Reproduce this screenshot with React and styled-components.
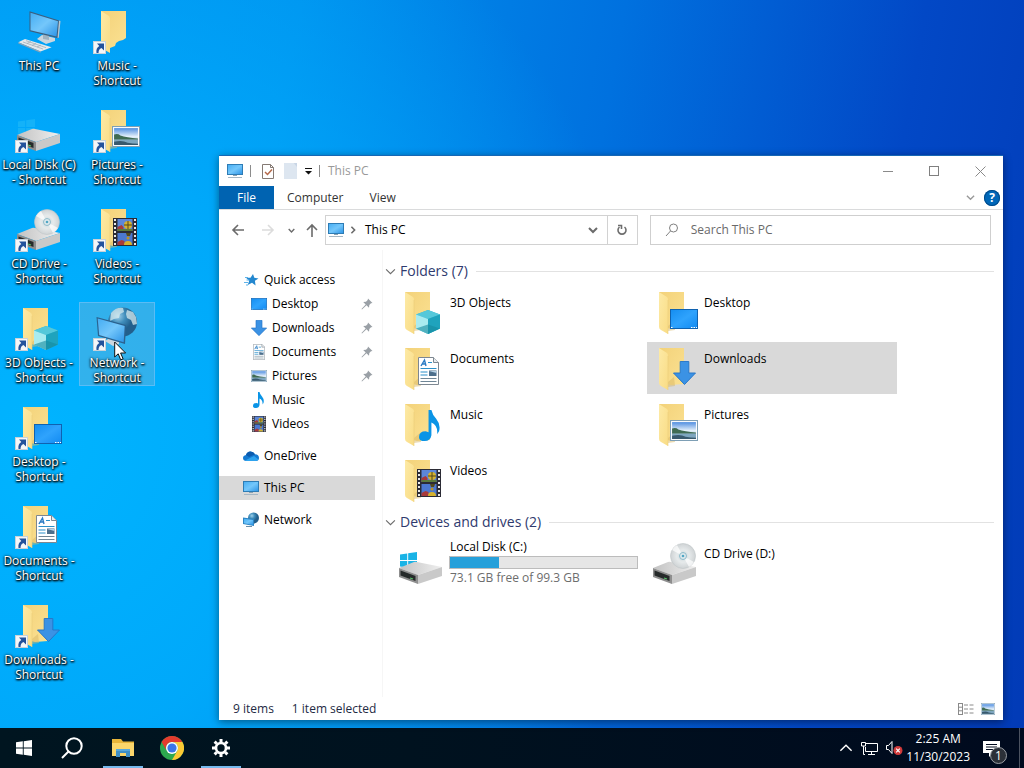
import React from "react";
import styled, { createGlobalStyle, css } from "styled-components";

const GlobalStyle = createGlobalStyle`
  * {
    box-sizing: border-box;
  }
  body {
    margin: 0;
    font-family: "Open Sans", "Noto Sans", sans-serif;
    font-size: 12px;
    line-height: 16px;
    color: #000;
  }
  button, input {
    font: inherit;
    color: inherit;
    border: none;
    background: none;
    padding: 0;
    margin: 0;
  }
  a {
    color: inherit;
    text-decoration: none;
  }
  svg {
    display: block;
    flex-shrink: 0;
  }
`;

const Screen = styled.div`
  display: flex;
  flex-direction: column;
  min-height: 100vh;
  background:
    radial-gradient(ellipse 60% 85% at 4% 58%, #00b4ff 0%, rgba(0, 174, 253, 0.8) 45%, rgba(0, 160, 245, 0) 100%),
    linear-gradient(100deg, #0094f1 0%, #0090ed 26%, #0071df 54%, #0248c6 80%, #023ab6 100%);
`;

const DesktopArea = styled.main`
  position: relative;
  flex: 1;
  display: flex;
  padding: 5px 1px;
`;

const IconGrid = styled.div`
  display: grid;
  grid-auto-flow: column;
  grid-template-rows: repeat(7, 84px);
  grid-auto-columns: 76px;
  gap: 15px 2px;
`;

const DesktopIcon = styled.button`
  position: relative;
  display: flex;
  flex-direction: column;
  align-items: center;
  padding: 4px 0;
  line-height: 15px;
  color: #fff;
  text-shadow: 0 1px 2px #000, 1px 1px 2px #000, 0 0 3px rgba(0, 0, 0, 0.8);
  border: 1px solid ${(props) => (props.$selected ? "#5abcf5" : "transparent")};
  background-color: ${(props) => (props.$selected ? "rgba(125, 180, 210, 0.4)" : "transparent")};
`;

const DesktopLabel = styled.span`
  white-space: pre;
  text-align: center;
`;

const Cursor = styled.svg`
  position: absolute;
  left: 34px;
  top: 38px;
`;

const Window = styled.section`
  position: absolute;
  top: 155px;
  right: 21px;
  bottom: 8px;
  left: 219px;
  display: flex;
  flex-direction: column;
  background-color: #fff;
  border-top: 1px solid #1667b5;
  box-shadow: 0 2px 8px rgba(0, 0, 0, 0.45);
`;

const TitleBar = styled.header`
  display: flex;
  align-items: center;
  height: 30px;
  padding-left: 8px;
`;

const Separator = styled.span`
  width: 1px;
  height: 12px;
  background-color: #8c8c8c;
  margin: 0 ${(props) => props.$right}px 0 7px;
`;

const QuickTools = styled.div`
  display: flex;
  align-items: center;
  gap: 8px;
`;

const WindowTitle = styled.h1`
  flex: 1;
  margin: 0;
  font-size: 12px;
  font-weight: 400;
  color: #999;
`;

const CaptionButton = styled.button`
  display: flex;
  align-items: center;
  justify-content: center;
  width: 46px;
  height: 30px;
  &:hover {
    background-color: #e5e5e5;
  }
`;

const Ribbon = styled.nav`
  display: flex;
  align-items: center;
  height: 24px;
  padding-right: 3px;
  border-bottom: 1px solid #dadbdc;
`;

const RibbonTab = styled.button`
  height: 23px;
  padding: 0 ${(props) => (props.$file ? 18 : 13)}px;
  color: ${(props) => (props.$file ? "#fff" : "#333")};
  background-color: ${(props) => (props.$file ? "#0063b1" : "transparent")};
`;

const RibbonSpacer = styled.span`
  flex: 1;
`;

const HelpButton = styled.button`
  width: 16px;
  height: 16px;
  margin-left: 9px;
  border-radius: 50%;
  background-color: #0067b8;
  box-shadow: inset 0 0 0 1px #004a8a;
  color: #fff;
  font-weight: 700;
  line-height: 16px;
`;

const NavBar = styled.div`
  display: flex;
  align-items: center;
  height: 40px;
  padding: 0 12px 0 11px;
`;

const NavButton = styled.button`
  display: flex;
  align-items: center;
  justify-content: center;
  width: ${(props) => props.$width || 16}px;
  height: 24px;
  margin-right: ${(props) => props.$gap || 0}px;
`;

const AddressBar = styled.div`
  flex: 318 1 0;
  display: flex;
  align-items: center;
  height: 30px;
  border: 1px solid #d2d2d2;
  padding-left: 2px;
`;

const Crumb = styled.button`
  flex: 1;
  text-align: left;
`;

const RefreshButton = styled.button`
  display: flex;
  align-items: center;
  justify-content: center;
  width: 30px;
  height: 28px;
  border-left: 1px solid #d2d2d2;
  margin-left: 9px;
`;

const SearchBox = styled.label`
  flex: 335 1 0;
  display: flex;
  align-items: center;
  gap: 12px;
  height: 30px;
  margin-left: 12px;
  padding-left: 14px;
  border: 1px solid #cfcfcf;
`;

const SearchInput = styled.input`
  flex: 1;
  min-width: 0;
  outline: none;
  &::placeholder {
    color: #6a6a6a;
    opacity: 1;
  }
`;

const Body = styled.div`
  flex: 1;
  display: flex;
`;

const Sidebar = styled.nav`
  width: 156px;
  padding-top: 18px;
  margin-right: 7px;
`;

const SideItem = styled.a`
  display: flex;
  align-items: center;
  gap: 5px;
  height: 24px;
  padding: 0 2px 0 ${(props) => (props.$nested ? 32 : 24)}px;
  margin-top: ${(props) => (props.$spaced ? 8 : 0)}px;
  background-color: ${(props) => (props.$active ? "#d9d9d9" : "transparent")};
`;

const SideLabel = styled.span`
  flex: 1;
`;

const Content = styled.div`
  flex: 1;
  padding: 10px 9px 0 2px;
  border-left: 1px solid #f6f6f6;
`;

const Group = styled.section`
  margin-bottom: 5px;
`;

const GroupHeader = styled.h2`
  display: flex;
  align-items: center;
  gap: 4px;
  height: 22px;
  margin: 0 0 4px;
  font-size: 14px;
  font-weight: 400;
  color: #2f3a6e;
  &::after {
    content: "";
    flex: 1;
    height: 1px;
    margin-left: 4px;
    background-color: #e2e2e2;
  }
`;

const TileGrid = styled.div`
  display: grid;
  grid-template-columns: repeat(auto-fill, 250px);
  gap: 4px;
  padding-left: 8px;
`;

const Tile = styled.button`
  display: flex;
  align-items: flex-start;
  gap: 5px;
  height: 52px;
  padding: 5px 5px 0 4px;
  text-align: left;
  background-color: ${(props) => (props.$selected ? "#d9d9d9" : "transparent")};
`;

const TileText = styled.span`
  flex: 1;
  padding-top: 4px;
  ${(props) =>
    props.$drive &&
    css`
      margin-top: -7px;
    `}
`;

const Capacity = styled.span`
  display: block;
  height: 13px;
  margin: 1px 0 1px -1px;
  border: 1px solid #bcbcbc;
  background-color: #e6e6e6;
`;

const CapacityUsed = styled.span`
  display: block;
  height: 100%;
  background-color: #26a0da;
`;

const TileNote = styled.span`
  color: #6d6d6d;
`;

const StatusBar = styled.footer`
  display: flex;
  align-items: center;
  gap: 18px;
  height: 23px;
  padding: 0 8px 0 14px;
  color: #1e2a44;
`;

const ViewSwitch = styled.div`
  display: flex;
  gap: 6px;
  margin-left: auto;
`;

const Taskbar = styled.footer`
  display: flex;
  align-items: center;
  height: 40px;
  color: #fff;
  background: linear-gradient(90deg, #001520 0%, #00121f 40%, #000a1e 100%);
`;

const TaskButton = styled.button`
  display: flex;
  align-items: center;
  justify-content: center;
  width: 48px;
  height: 40px;
`;

const RunningApps = styled.div`
  display: flex;
  gap: 1px;
  margin-left: 3px;
`;

const AppButton = styled(TaskButton)`
  position: relative;
  &::after {
    content: "";
    position: absolute;
    bottom: 0;
    width: 40px;
    height: 2px;
    background-color: ${(props) => (props.$running ? "#76b9ed" : "transparent")};
  }
`;

const Tray = styled.div`
  display: flex;
  align-items: center;
  gap: 3px;
  margin-left: auto;
`;

const TrayIcons = styled.div`
  display: flex;
  align-items: center;
  gap: 8px;
`;

const Clock = styled.button`
  display: flex;
  flex-direction: column;
  align-items: center;
  line-height: 18px;
`;

const ActionCenter = styled.button`
  position: relative;
  width: 24px;
  height: 24px;
  margin: 0 9px 0 10px;
`;

const Badge = styled.span`
  position: absolute;
  right: 0;
  bottom: -4px;
  width: 17px;
  height: 17px;
  border: 1px solid #9a9fa5;
  border-radius: 50%;
  background-color: #2b3038;
  line-height: 15px;
`;

const ShowDesktop = styled.button`
  width: 5px;
  height: 40px;
  border-left: 1px solid #4b5260;
`;

const Defs = styled.svg`
  position: absolute;
`;

const Gradients = () => (
  <Defs width="0" height="0" aria-hidden="true">
    <defs>
      <linearGradient id="folderBack" x1="0" y1="0" x2="1" y2="1">
        <stop offset="0" stopColor="#f3d27a" />
        <stop offset="1" stopColor="#fbe192" />
      </linearGradient>
      <linearGradient id="folderFlap" x1="0" y1="0" x2="1" y2="1">
        <stop offset="0" stopColor="#fdeaa6" />
        <stop offset="1" stopColor="#f9dc85" />
      </linearGradient>
      <linearGradient id="screen" x1="0" y1="0" x2="1" y2="1">
        <stop offset="0" stopColor="#45adf3" />
        <stop offset="0.5" stopColor="#74c7fb" />
        <stop offset="1" stopColor="#2b93e6" />
      </linearGradient>
      <linearGradient id="desk" x1="0" y1="0" x2="1" y2="1">
        <stop offset="0" stopColor="#148df0" />
        <stop offset="0.5" stopColor="#2fa3fd" />
        <stop offset="1" stopColor="#118af2" />
      </linearGradient>
      <linearGradient id="metal" x1="0" y1="0" x2="1" y2="0">
        <stop offset="0" stopColor="#c2c2c2" />
        <stop offset="1" stopColor="#efefef" />
      </linearGradient>
      <linearGradient id="photo" x1="0" y1="0" x2="0" y2="1">
        <stop offset="0" stopColor="#4f8ee0" />
        <stop offset="0.5" stopColor="#e3effa" />
        <stop offset="1" stopColor="#9cc0dc" />
      </linearGradient>
      <radialGradient id="disc">
        <stop offset="0" stopColor="#c9d6da" />
        <stop offset="0.5" stopColor="#e6eaeb" />
        <stop offset="1" stopColor="#cfd3d5" />
      </radialGradient>
      <radialGradient id="globe" cx="0.35" cy="0.3">
        <stop offset="0" stopColor="#9fd0ea" />
        <stop offset="0.5" stopColor="#3f8dbb" />
        <stop offset="1" stopColor="#225f8c" />
      </radialGradient>
    </defs>
  </Defs>
);

const Folder = () => (
  <>
    <path d="M8 1h25v36l-13 1-12-3z" fill="url(#folderBack)" />
    <path d="M17 35l6-5 1 9-7 1z" fill="#d9b765" opacity="0.5" />
    <path d="M8 1l8 5q1 1 1 3v34l-7-4q-2-1-2-3z" fill="url(#folderFlap)" />
    <path d="M17 9v34" stroke="#ebcc78" strokeWidth="0.6" />
  </>
);

const Photo = ({ x, y, w, h }) => (
  <svg x={x} y={y} width={w} height={h} viewBox="0 0 27 20" preserveAspectRatio="none">
    <rect x="0.5" y="0.5" width="26" height="19" fill="#fff" stroke="#7e9fb5" />
    <rect x="2" y="2" width="23" height="16" fill="url(#photo)" />
    <path d="M2 8q4-1 6 1 6 2 17 3v1H2z" fill="#3f6b52" />
    <path d="M2 13h23v5H2z" fill="#7ea6bf" />
    <path d="M2 15q8-2 13 1 5 1 10 1v1H2z" fill="#38596d" />
  </svg>
);

const Film = ({ x, y, w, h }) => (
  <svg x={x} y={y} width={w} height={h} viewBox="0 0 24 28" preserveAspectRatio="none">
    <rect width="24" height="28" fill="#2b2b35" />
    <path d="M2 1v27M22 1v27" stroke="#e9e9e9" strokeWidth="2" strokeDasharray="2 2" />
    <rect x="4.5" y="1" width="15" height="12" fill="#5c86d8" />
    <rect x="4.5" y="15" width="15" height="12" fill="#4c78d0" />
    <path d="M4.500 9l4-2 2 2v4h-6z" fill="#a83a3a" />
    <path d="M4.500 11h15v2h-15z" fill="#5b7a3a" />
    <circle cx="15" cy="7" r="4" fill="#d6b22e" />
    <path d="M11 7h8M15 3v8" stroke="#54491b" strokeWidth="1" />
    <path d="M4.500 24l4-2 3 1v4h-7z" fill="#a83a3a" />
    <path d="M13 15h5l-1 3h-3z" fill="#54491b" />
    <circle cx="15" cy="20" r="1.500" fill="#b99326" />
    <path d="M11 27q0-4 4-4t4 4z" fill="#d6b22e" />
  </svg>
);

const Page = ({ x, y, w, h }) => (
  <svg x={x} y={y} width={w} height={h} viewBox="0 0 21 28" preserveAspectRatio="none">
    <path d="M0.5 0.5h15l5 5v22h-20z" fill="#fff" stroke="#7d8791" />
    <path d="M15.5 0.5v5h5" fill="#e7ebee" stroke="#7d8791" />
    <path d="M3 9l3.500-6L8 9M4.500 7h3" fill="none" stroke="#2b7cc4" strokeWidth="1.4" />
    <path d="M10 5.500h4M2.500 11.500h16M2.500 15h7M2.500 18h7" stroke="#2b90c9" strokeWidth="1.2" />
    <path d="M2.500 21.500h16M2.500 24.500h16" stroke="#6f8696" />
    <rect x="11" y="13.500" width="7.500" height="5.500" fill="#4d6f8c" />
    <path d="M11 14h7.500v2z" fill="#b9d4e8" />
  </svg>
);

const DownArrow = ({ x, y, w, h }) => (
  <svg x={x} y={y} width={w} height={h} viewBox="0 0 24 25" preserveAspectRatio="none">
    <path d="M7.500 0.500h9v12h7L12 24.500 0.500 12.500h7z" fill="#3b92e4" stroke="#2676c8" />
  </svg>
);

const Note = ({ x, y, w, h }) => (
  <svg x={x} y={y} width={w} height={h} viewBox="0 0 22 32" preserveAspectRatio="none">
    <path
      d="M10 0h3q1 5 5 9 5 6 3 13l-2 3q1-9-6-12v13q-1 6-7 6-6 0-6-4 0-6 7-6l3 1z"
      fill="#0a94e6"
    />
  </svg>
);

const DeskRect = ({ x, y, w, h }) => (
  <svg x={x} y={y} width={w} height={h} viewBox="0 0 28 20" preserveAspectRatio="none">
    <rect x="0.5" y="0.5" width="27" height="19" fill="url(#desk)" stroke="#0f62b0" />
    <path d="M1 18.500h1.500M21 18.500h6" stroke="#fff" strokeDasharray="1.500 1" />
  </svg>
);

const Drive = () => (
  <>
    <path d="M2 26l15-6q1-.4 3 0l25 5-24 8z" fill="url(#metal)" />
    <path d="M21 33l24-8v9l-24 8z" fill="#c9c9c9" />
    <path d="M2 26l19 7v9L2 35z" fill="#8e8e8e" />
    <path d="M3.500 28.500l15 5.500v5L3.500 33.500z" fill="#262a2a" />
    <path d="M13 36l3 1" stroke="#59c46a" strokeWidth="1.2" />
  </>
);

const WindowsLogo = ({ x, y, size, color }) => (
  <svg x={x} y={y} width={size} height={size} viewBox="0 0 16 16">
    <path
      d="M0 2.300l6.800-1v6.200H0zM7.700 1.200L16 0v7.500H7.700zM0 8.400h6.800v6.300L0 13.700zM7.700 8.400H16V16l-8.300-1.200z"
      fill={color}
    />
  </svg>
);

const bigArt = {
  pc: () => (
    <>
      <path d="M22 29l5-4 13 3v3l-9 3z" fill="#ccd6de" />
      <path d="M28 24l6 1v5l-6-1z" fill="#9fb3c2" />
      <path d="M14.500 1.300L45 10.700l-1.700 17.600-28.800-7z" fill="#3a5f80" />
      <path d="M15.500 2.800l27.500 8.500-1.500 15.200-26-6.200z" fill="url(#screen)" />
      <path d="M44 10.400l1.500.6-1.700 16.800-1.300.2z" fill="#b6c7d3" />
      <path d="M3.300 32.300L10 29l26.600 8.300-11 4.300z" fill="#e4e8eb" />
      <path d="M3.300 32.300l22.300 9.300v1.200L3.300 33.600z" fill="#8da2b2" />
      <path d="M8 32l20 7M11 30.700l20 7M12 33.500l4-2M17 35.500l4-2M22 37l4-2" stroke="#9aa9b5" strokeWidth="0.7" />
    </>
  ),
  // on the desktop the note melts into the wallpaper, so only the cut folder is left
  music: ({ desktop }) =>
    desktop ? (
      <>
        <path d="M8 1h25v27l-3 2-4 1-3 2-1 3-5 2-9-3z" fill="url(#folderBack)" />
        <path d="M8 1l8 5q1 1 1 3v34l-7-4q-2-1-2-3z" fill="url(#folderFlap)" />
      </>
    ) : (
      <>
        <Folder />
        <Note x="22" y="7" w="21" h="31" />
      </>
    ),
  drive: ({ desktop }) => (
    <>
      <WindowsLogo x="3" y="10" size="17" color={desktop ? "#14b2f8" : "#19b3e6"} />
      <Drive />
    </>
  ),
  pictures: () => (
    <>
      <Folder />
      <Photo x="19" y="17" w="28" h="21" />
    </>
  ),
  cd: () => (
    <>
      <Drive />
      <circle cx="32" cy="14" r="12.500" fill="url(#disc)" stroke="#c0c6c8" strokeWidth="0.6" />
      <path d="M32 14L21 8a12.500 12.500 0 0 1 5-5z" fill="#fff" opacity="0.7" />
      <path d="M32 14l11 6a12.500 12.500 0 0 1-5 5z" fill="#fff" opacity="0.7" />
      <circle cx="32" cy="14" r="3.500" fill="#dfe9ec" stroke="#8fbccb" />
      <circle cx="32" cy="14" r="1.300" fill="#4fa6c4" />
    </>
  ),
  videos: () => (
    <>
      <Folder />
      <Film x="20" y="10" w="24" h="28" />
    </>
  ),
  cube: () => (
    <>
      <Folder />
      <path d="M19 23.500L31 19l12 4.500v14L31 43l-12-5.500z" fill="#37b5cc" />
      <path d="M19 23.500L31 19l12 4.500-12 4.500z" fill="#55c8da" />
      <path d="M19 23.500l12 4.500v15l-12-5.500z" fill="#a9ebf0" />
      <path d="M31 28l12-4.500v14L31 43z" fill="#1fa3bd" />
      <path d="M19 37.500l12-4 12 4L31 43z" fill="#158a9f" opacity="0.6" />
    </>
  ),
  network: () => (
    <>
      <circle cx="29.500" cy="15" r="14.500" fill="url(#globe)" />
      <path d="M18 6q5-6 12-5l1 4-4 2-1 4-5 1-4 2zM34 3l6 2 3 5 1 7-4 1-2-5-4-2-1-4z" fill="#d6e9ee" opacity="0.75" />
      <path d="M12 34l5-3 9 3v3l-6 2z" fill="#ccd6de" />
      <path d="M3.500 10L33 18l-1 19-27-8z" fill="#2b628f" />
      <path d="M4.700 11.600l27 7.400-1 16.200-24.500-7.200z" fill="url(#screen)" />
    </>
  ),
  desktop: () => (
    <>
      <Folder />
      <DeskRect x="19" y="18" w="28" h="20" />
    </>
  ),
  documents: () => (
    <>
      <Folder />
      <Page x="21" y="10" w="21" h="28" />
    </>
  ),
  downloads: () => (
    <>
      <Folder />
      <DownArrow x="22" y="14" w="23" h="24" />
    </>
  ),
};

const BigIcon = ({ name, shortcut, desktop }) => {
  const Art = bigArt[name];
  return (
    <svg width="48" height="48" viewBox="0 0 48 48" aria-hidden="true">
      <Art desktop={desktop} />
      {shortcut && (
        <>
          <rect x="0.500" y="31.500" width="12" height="12" fill="#f4f6f8" stroke="#c9d2d9" />
          <path d="M4 33.500h7v7l-2.500-2.500q-3 1-3 5h-2q-.8-5 2.800-7z" fill="#23529c" />
        </>
      )}
    </svg>
  );
};

const SmallPc = () => (
  <>
    <rect x="0.500" y="1.500" width="15" height="10" fill="url(#screen)" stroke="#2e7cb5" />
    <path d="M6 12h4v1H6z" fill="#8aa0b0" />
    <path d="M1 14.500h14" stroke="#a6b7c4" />
  </>
);

const smallArt = {
  pc: SmallPc,
  star: () => (
    <>
      <path d="M10 2l1.300 3.800 4.200.6-3.600 2.400.7 4.700-3.600-2.800-4.300 2.300 1.500-4.300L3 5.800l4.500-.1z" fill="#2387cf" />
      <path d="M2 5.500h3M3.500 8h3M1 10.500h4M3 13h2" stroke="#5db2ea" />
    </>
  ),
  desktop: () => <DeskRect x="0" y="2" w="16" h="12" />,
  downloads: () => <DownArrow x="0" y="0" w="16" h="16" />,
  documents: () => <Page x="2" y="0" w="12" h="16" />,
  pictures: () => <Photo x="0" y="2" w="16" h="12" />,
  music: () => <Note x="2" y="0" w="11" h="16" />,
  videos: () => <Film x="1" y="0" w="14" h="16" />,
  cloud: () => (
    <>
      <path d="M3.500 13q-3.500 0-3.500-3 0-2.500 3-3 1-3.500 4.500-3.500 3 0 4.500 2.800 4 .2 4 3.700 0 3-3.500 3z" fill="#1479d1" />
      <path d="M3 7q1-3.500 4.500-3.500 3 0 4.500 2.800L6 9z" fill="#0c5bae" />
      <path d="M2 12.500L11 8l4.500 3.500q-1 1.500-3 1.500h-9z" fill="#2ea3ee" />
    </>
  ),
  network: () => (
    <>
      <circle cx="10.500" cy="6" r="5.500" fill="url(#globe)" />
      <path d="M0 5.500L11 7v7L0 12z" fill="#2e86c4" />
      <path d="M1 6.700l9 1.200v5L1 11.200z" fill="url(#screen)" />
      <path d="M3 14.500h6" stroke="#6b8ea8" />
    </>
  ),
};

const SmallIcon = ({ name }) => {
  const Art = smallArt[name];
  return (
    <svg width="16" height="16" viewBox="0 0 16 16" aria-hidden="true">
      <Art />
    </svg>
  );
};

const Pin = () => (
  <svg width="12" height="12" viewBox="0 0 12 12" aria-hidden="true">
    <path
      d="M7 .5L11.500 5l-1.500.3-1.700 1.700-.3 2.800L5.500 7.300 1 11.500.5 11l4.200-4.500L2.200 4l2.800-.3L6.700 2z"
      fill="#9aa0a6"
    />
  </svg>
);

const Chevron = ({ w = 8, color = "#6b6b6b", strokeWidth = 1.5, dir = "down" }) => {
  const d = { down: "M1 3l4 4 4-4", up: "M1 7l4-4 4 4", right: "M3 1l4 4-4 4" }[dir];
  return (
    <svg width={w} height={w} viewBox="0 0 10 10" fill="none" stroke={color} strokeWidth={strokeWidth} aria-hidden="true">
      <path d={d} />
    </svg>
  );
};

const Arrow = ({ d, color = "#6b6b6b" }) => (
  <svg width="14" height="14" viewBox="0 0 14 14" fill="none" stroke={color} strokeWidth="1.600" aria-hidden="true">
    <path d={d} />
  </svg>
);

const desktopIcons = [
  { icon: "pc", label: "This PC", plain: true },
  { icon: "drive", label: "Local Disk (C)\n- Shortcut" },
  { icon: "cd", label: "CD Drive -\nShortcut" },
  { icon: "cube", label: "3D Objects -\nShortcut" },
  { icon: "desktop", label: "Desktop -\nShortcut" },
  { icon: "documents", label: "Documents -\nShortcut" },
  { icon: "downloads", label: "Downloads -\nShortcut" },
  { icon: "music", label: "Music -\nShortcut" },
  { icon: "pictures", label: "Pictures -\nShortcut" },
  { icon: "videos", label: "Videos -\nShortcut" },
  { icon: "network", label: "Network -\nShortcut", selected: true },
];

const sideItems = [
  { icon: "star", label: "Quick access" },
  { icon: "desktop", label: "Desktop", nested: true, pinned: true },
  { icon: "downloads", label: "Downloads", nested: true, pinned: true },
  { icon: "documents", label: "Documents", nested: true, pinned: true },
  { icon: "pictures", label: "Pictures", nested: true, pinned: true },
  { icon: "music", label: "Music", nested: true },
  { icon: "videos", label: "Videos", nested: true },
  { icon: "cloud", label: "OneDrive", spaced: true },
  { icon: "pc", label: "This PC", spaced: true, active: true },
  { icon: "network", label: "Network", spaced: true },
];

const folders = [
  { icon: "cube", label: "3D Objects" },
  { icon: "desktop", label: "Desktop" },
  { icon: "documents", label: "Documents" },
  { icon: "downloads", label: "Downloads", selected: true },
  { icon: "music", label: "Music" },
  { icon: "pictures", label: "Pictures" },
  { icon: "videos", label: "Videos" },
];

const disk = { total: 99.3, free: 73.1 };

const Explorer = () => (
  <Window aria-label="This PC">
    <TitleBar>
      <SmallIcon name="pc" />
      <Separator $right={9} />
      <QuickTools>
        <button aria-label="Properties">
          <svg width="16" height="16" viewBox="0 0 16 16" fill="none">
            <path d="M2.500 1.500h8l3 3v11h-11z" fill="#fff" stroke="#857a74" />
            <path d="M10.500 1.500v3h3" stroke="#857a74" />
            <path d="M5 9l2.500 2.500L12 6.500" stroke="#b5694a" strokeWidth="1.500" />
          </svg>
        </button>
        <button aria-label="New folder">
          <svg width="13" height="16" viewBox="0 0 12 16" preserveAspectRatio="none">
            <rect width="12" height="16" fill="#dde6f0" />
            <path d="M9 0h3v4z" fill="#c9d6e6" />
          </svg>
        </button>
        <button aria-label="Customize Quick Access Toolbar">
          <svg width="7" height="8" viewBox="0 0 7 8">
            <path d="M0 1h7v1H0zM0 4h7L3.500 7.500z" fill="#111" />
          </svg>
        </button>
      </QuickTools>
      <Separator $right={8} />
      <WindowTitle>This PC</WindowTitle>
      <CaptionButton aria-label="Minimize">
        <svg width="10" height="10" viewBox="0 0 10 10" stroke="#8a8a8a">
          <path d="M0 5.500h10" />
        </svg>
      </CaptionButton>
      <CaptionButton aria-label="Maximize">
        <svg width="10" height="10" viewBox="0 0 10 10" fill="none" stroke="#808080">
          <rect x="0.500" y="0.500" width="9" height="9" />
        </svg>
      </CaptionButton>
      <CaptionButton aria-label="Close">
        <svg width="11" height="11" viewBox="0 0 11 11" stroke="#8a8a8a">
          <path d="M.5.5l10 10M10.500.5l-10 10" />
        </svg>
      </CaptionButton>
    </TitleBar>
    <Ribbon>
      <RibbonTab $file>File</RibbonTab>
      <RibbonTab>Computer</RibbonTab>
      <RibbonTab>View</RibbonTab>
      <RibbonSpacer />
      <button aria-label="Expand the Ribbon">
        <Chevron w={9} color="#999" />
      </button>
      <HelpButton aria-label="Help">?</HelpButton>
    </Ribbon>
    <NavBar>
      <NavButton $gap={14} aria-label="Back">
        <Arrow d="M13 7H2M7 2L2 7l5 5" />
      </NavButton>
      <NavButton $gap={10} aria-label="Forward">
        <Arrow d="M1 7h11M7 2l5 5-5 5" color="#dcdcdc" />
      </NavButton>
      <NavButton $width={10} $gap={8} aria-label="Recent locations">
        <Chevron w={7} strokeWidth={2} />
      </NavButton>
      <NavButton $gap={5} aria-label="Up">
        <Arrow d="M7 14V2M2 7l5-5 5 5" />
      </NavButton>
      <AddressBar>
        <SmallIcon name="pc" />
        <NavButton $width={18} $gap={3} aria-label="Show locations">
          <Chevron w={8} dir="right" strokeWidth={2} />
        </NavButton>
        <Crumb>This PC</Crumb>
        <NavButton $width={10} aria-label="Previous locations">
          <Chevron w={10} strokeWidth={2} />
        </NavButton>
        <RefreshButton aria-label="Refresh">
          <svg width="12" height="12" viewBox="0 0 12 12" fill="none" stroke="#6e6e6e" strokeWidth="1.600">
            <path d="M8.500 3a4 4 0 1 1-5 0M2 1.500h3.500V5" />
          </svg>
        </RefreshButton>
      </AddressBar>
      <SearchBox>
        <svg width="14" height="14" viewBox="0 0 14 14" fill="none" stroke="#808080">
          <circle cx="8.500" cy="5" r="4" />
          <path d="M5.500 8L1 13" />
        </svg>
        <SearchInput type="text" placeholder="Search This PC" aria-label="Search This PC" />
      </SearchBox>
    </NavBar>
    <Body>
      <Sidebar>
        {sideItems.map((item) => (
          <SideItem
            key={item.label}
            href="#"
            $nested={item.nested}
            $spaced={item.spaced}
            $active={item.active}
          >
            <SmallIcon name={item.icon} />
            <SideLabel>{item.label}</SideLabel>
            {item.pinned && <Pin />}
          </SideItem>
        ))}
      </Sidebar>
      <Content>
        <Group>
          <GroupHeader>
            <Chevron w={11} strokeWidth={1} />
            Folders (7)
          </GroupHeader>
          <TileGrid>
            {folders.map((folder) => (
              <Tile key={folder.label} $selected={folder.selected}>
                <BigIcon name={folder.icon} />
                <TileText>{folder.label}</TileText>
              </Tile>
            ))}
          </TileGrid>
        </Group>
        <Group>
          <GroupHeader>
            <Chevron w={11} strokeWidth={1} />
            Devices and drives (2)
          </GroupHeader>
          <TileGrid>
            <Tile>
              <BigIcon name="drive" />
              <TileText $drive>
                Local Disk (C:)
                <Capacity
                  role="meter"
                  aria-label="Used space"
                  aria-valuemin={0}
                  aria-valuemax={disk.total}
                  aria-valuenow={disk.total - disk.free}
                >
                  <CapacityUsed style={{ width: `${((disk.total - disk.free) / disk.total) * 100}%` }} />
                </Capacity>
                <TileNote>
                  {disk.free} GB free of {disk.total} GB
                </TileNote>
              </TileText>
            </Tile>
            <Tile>
              <BigIcon name="cd" />
              <TileText>CD Drive (D:)</TileText>
            </Tile>
          </TileGrid>
        </Group>
      </Content>
    </Body>
    <StatusBar>
      <span>9 items</span>
      <span>1 item selected</span>
      <ViewSwitch>
        <button aria-label="Details view">
          <svg width="17" height="12" viewBox="0 0 17 12" fill="none" stroke="#8a8a8a">
            <rect x="0.500" y="0.500" width="4" height="11" />
            <path d="M.5 4.200h4M.5 7.800h4M6 2h10M6 6h10M6 10h10" strokeDasharray="4 1.500" />
          </svg>
        </button>
        <button aria-label="Large icons view">
          <svg width="14" height="12" viewBox="0 0 14 12">
            <Photo x="0" y="0" w="14" h="12" />
          </svg>
        </button>
      </ViewSwitch>
    </StatusBar>
  </Window>
);

const App = () => (
  <>
    <GlobalStyle />
    <Gradients />
    <Screen>
      <DesktopArea>
        <IconGrid>
          {desktopIcons.map((item) => (
            <DesktopIcon key={item.label} $selected={item.selected}>
              <BigIcon name={item.icon} shortcut={!item.plain} desktop />
              <DesktopLabel>{item.label}</DesktopLabel>
              {item.selected && (
                <Cursor width="13" height="20" viewBox="0 0 13 20" aria-hidden="true">
                  <path d="M.7 1v15l3.500-3.200 2.500 6 2.400-1-2.500-5.800h5z" fill="#fff" stroke="#111" />
                </Cursor>
              )}
            </DesktopIcon>
          ))}
        </IconGrid>
        <Explorer />
      </DesktopArea>
      <Taskbar>
        <TaskButton aria-label="Start">
          <svg width="16" height="16">
            <WindowsLogo x="0" y="0" size="16" color="#fff" />
          </svg>
        </TaskButton>
        <TaskButton aria-label="Search">
          <svg width="22" height="22" viewBox="0 0 22 22" fill="none" stroke="#fff" strokeWidth="2">
            <circle cx="13" cy="9" r="7.700" />
            <path d="M7.500 14.500L1 21" />
          </svg>
        </TaskButton>
        <RunningApps>
          <AppButton $running aria-label="File Explorer">
            <svg width="22" height="18" viewBox="0 0 22 18">
              <path d="M0 0h9l2 2.500h11V17H0z" fill="#e8b53a" />
              <path d="M0 4h22v13H0z" fill="#fbd66b" />
              <path d="M4 10h14v8h-4v-4H8v4H4z" fill="#3f8fc6" />
              <path d="M4 10h14v2H4z" fill="#58a8dc" />
            </svg>
          </AppButton>
          <AppButton aria-label="Google Chrome">
            <svg width="24" height="24" viewBox="0 0 24 24">
              <circle cx="12" cy="12" r="12" fill="#2da94f" />
              <path d="M1.600 6A12 12 0 0 1 22.400 6H12a6 6 0 0 0-5.200 9z" fill="#e33b2e" />
              <path d="M22.400 6A12 12 0 0 1 12 24l5.200-9A6 6 0 0 0 12 6z" fill="#fcc934" />
              <circle cx="12" cy="12" r="6" fill="#fff" />
              <circle cx="12" cy="12" r="4.600" fill="#3a76e8" />
            </svg>
          </AppButton>
          <AppButton $running aria-label="Settings">
            <svg width="18" height="18" viewBox="0 0 18 18" fill="none" stroke="#fff">
              <circle cx="9" cy="9" r="5" strokeWidth="2.600" />
              <path
                d="M9 0v3M9 15v3M0 9h3M15 9h3M2.600 2.600l2.200 2.200M13.200 13.200l2.200 2.200M2.600 15.400l2.200-2.200M13.200 4.800l2.200-2.200"
                strokeWidth="3"
              />
            </svg>
          </AppButton>
        </RunningApps>
        <Tray>
          <TrayIcons>
            <button aria-label="Show hidden icons">
              <Chevron w={14} dir="up" color="#fff" strokeWidth={1} />
            </button>
            <svg width="17" height="15" viewBox="0 0 17 15" fill="none" stroke="#fff" role="img" aria-label="Network">
              <path d="M5 2.500h11.500v8H4.500V6M10.500 10.500v3M7 13.500h7M.5 1.500h4v3.500h-4zM2.500 5v8.500H4" />
            </svg>
            <svg width="17" height="16" viewBox="0 0 17 16" fill="none" role="img" aria-label="Volume muted">
              <path d="M.5 5.500h2l3.500-4v12l-3.500-4h-2z" stroke="#fff" />
              <circle cx="12" cy="10.500" r="4.500" fill="#d13a3a" />
              <path d="M10.200 8.700l3.600 3.600M13.800 8.700l-3.600 3.600" stroke="#fff" strokeWidth="1.200" />
            </svg>
          </TrayIcons>
          <Clock>
            <span>2:25 AM</span>
            <span>11/30/2023</span>
          </Clock>
          <ActionCenter aria-label="Notifications">
            <svg width="17" height="17" viewBox="0 0 17 17">
              <path d="M0 1h17v12h-7l-4 4v-4H0z" fill="#fff" />
              <path d="M3 4.500h11M3 7h11M3 9.500h7" stroke="#000a1e" />
            </svg>
            <Badge>1</Badge>
          </ActionCenter>
          <ShowDesktop aria-label="Show desktop" />
        </Tray>
      </Taskbar>
    </Screen>
  </>
);

export default App;
